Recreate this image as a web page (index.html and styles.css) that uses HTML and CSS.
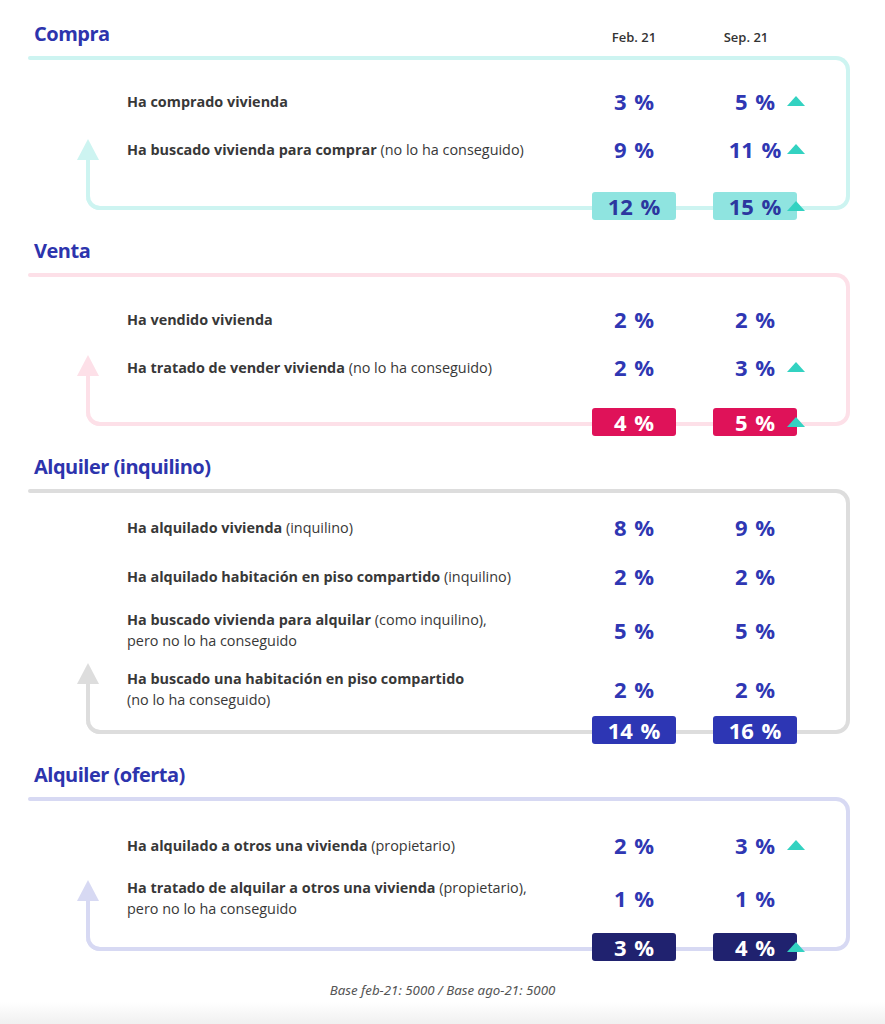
FILE: index.html
```html
<!DOCTYPE html>
<html lang="es">
<head>
<meta charset="utf-8">
<title>Compra, venta y alquiler</title>
<link rel="stylesheet" href="styles.css">
</head>
<body>
<main class="page">
  <section class="block compra">
    <div class="head">
      <h2 class="title">Compra</h2>
      <span class="col-h">Feb. 21</span>
      <span class="col-h col-h2">Sep. 21</span>
    </div>
    <div class="frame">
      <span class="arrow"></span>
      <div class="row"><p class="label"><b>Ha comprado vivienda</b></p><span class="val">3 %</span><span class="val up">5 %</span></div>
      <div class="row"><p class="label"><b>Ha buscado vivienda para comprar</b> (no lo ha conseguido)</p><span class="val">9 %</span><span class="val up">11 %</span></div>
      <div class="row totals"><span></span><span class="badge">12 %</span><span class="badge up">15 %</span></div>
    </div>
  </section>

  <section class="block venta">
    <div class="head"><h2 class="title">Venta</h2></div>
    <div class="frame">
      <span class="arrow"></span>
      <div class="row"><p class="label"><b>Ha vendido vivienda</b></p><span class="val">2 %</span><span class="val">2 %</span></div>
      <div class="row"><p class="label"><b>Ha tratado de vender vivienda</b> (no lo ha conseguido)</p><span class="val">2 %</span><span class="val up">3 %</span></div>
      <div class="row totals"><span></span><span class="badge">4 %</span><span class="badge up">5 %</span></div>
    </div>
  </section>

  <section class="block inquilino">
    <div class="head"><h2 class="title">Alquiler (inquilino)</h2></div>
    <div class="frame">
      <span class="arrow"></span>
      <div class="row"><p class="label"><b>Ha alquilado vivienda</b> (inquilino)</p><span class="val">8 %</span><span class="val">9 %</span></div>
      <div class="row"><p class="label"><b>Ha alquilado habitación en piso compartido</b> (inquilino)</p><span class="val">2 %</span><span class="val">2 %</span></div>
      <div class="row two"><p class="label"><b>Ha buscado vivienda para alquilar</b> (como inquilino),<br>pero no lo ha conseguido</p><span class="val">5 %</span><span class="val">5 %</span></div>
      <div class="row two"><p class="label"><b>Ha buscado una habitación en piso compartido</b><br>(no lo ha conseguido)</p><span class="val">2 %</span><span class="val">2 %</span></div>
      <div class="row totals"><span></span><span class="badge">14 %</span><span class="badge">16 %</span></div>
    </div>
  </section>

  <section class="block oferta">
    <div class="head"><h2 class="title">Alquiler (oferta)</h2></div>
    <div class="frame">
      <span class="arrow"></span>
      <div class="row"><p class="label"><b>Ha alquilado a otros una vivienda</b> (propietario)</p><span class="val">2 %</span><span class="val up">3 %</span></div>
      <div class="row two"><p class="label"><b>Ha tratado de alquilar a otros una vivienda</b> (propietario),<br>pero no lo ha conseguido</p><span class="val">1 %</span><span class="val">1 %</span></div>
      <div class="row totals"><span></span><span class="badge">3 %</span><span class="badge up">4 %</span></div>
    </div>
  </section>

  <p class="base">Base feb-21: 5000 / Base ago-21: 5000</p>
  <div class="fade"></div>
</main>
</body>
</html>
```

FILE: styles.css
```css
html, body {
  margin: 0;
  padding: 0;
  background: #ffffff;
}

body {
  font-family: "Open Sans", "Noto Sans", sans-serif;
  color: #3b3b3b;
}

.page {
  width: 885px;
  padding-top: 22px;
}

.block {
  margin: 0 35px 0 28px;
  --gap: 14px;
  --two: 44px;
}

.block + .block {
  margin-top: 29px;
}

.compra {
  --line: #cdf4f1;
  --badge: #8fe4e0;
  --badge-text: #2c379f;
  --pt: 24px;
  --bt: 12px;
}

.venta {
  --line: #fde0e8;
  --badge: #df1259;
  --badge-text: #ffffff;
  --pt: 25px;
  --bt: 10px;
}

.inquilino {
  --line: #dddddd;
  --badge: #2d36b4;
  --badge-text: #ffffff;
  --pt: 17px;
  --gap: 15px;
  --bt: -10px;
}

.oferta {
  --line: #d7d9f3;
  --badge: #20226f;
  --badge-text: #ffffff;
  --pt: 27px;
  --bt: -1px;
}

.head {
  display: grid;
  grid-template-columns: 1fr 84px 84px;
  column-gap: 37px;
  align-items: center;
  padding: 0 53px 0 6px;
  height: 24px;
  margin-bottom: 10px;
}

.title {
  margin: 0;
  font-family: "Open Sans", "Noto Sans", sans-serif;
  font-weight: 700;
  font-size: 20px;
  line-height: 24px;
  color: #2d34ad;
  letter-spacing: -0.5px;
  white-space: nowrap;
}

.col-h {
  font-size: 13px;
  font-weight: 600;
  color: #333333;
  text-align: center;
  padding-top: 6px;
}

.col-h2 {
  padding-right: 18px;
}

.frame {
  position: relative;
  margin-left: 58px;
  border: 4px solid var(--line);
  border-left: 0;
  border-radius: 0 14px 14px 14px;
  padding: var(--pt) 49px 0 41px;
  display: flex;
  flex-direction: column;
  gap: var(--gap);
}

.frame::before {
  content: "";
  position: absolute;
  left: -58px;
  top: -4px;
  width: 60px;
  height: 4px;
  border-radius: 2px 0 0 2px;
  background: var(--line);
}

.arrow {
  position: absolute;
  left: 0;
  bottom: -4px;
  width: 20px;
  height: 50px;
  box-sizing: border-box;
  border-left: 4px solid var(--line);
  border-bottom: 4px solid var(--line);
  border-bottom-left-radius: 14px;
}

.arrow::before {
  content: "";
  position: absolute;
  left: -13px;
  top: -21px;
  border-left: 11px solid transparent;
  border-right: 11px solid transparent;
  border-bottom: 21px solid var(--line);
}

.row {
  display: grid;
  grid-template-columns: 1fr 84px 84px;
  column-gap: 37px;
  align-items: center;
  min-height: 34px;
}

.row.two {
  min-height: var(--two);
}

.label {
  margin: 0;
  font-size: 14.4px;
  line-height: 21px;
  font-weight: 400;
  color: #383838;
}

.label b {
  font-weight: 700;
}

.val {
  position: relative;
  text-align: center;
  font-size: 22px;
  line-height: 24px;
  font-weight: 700;
  color: #2f37b3;
  word-spacing: 2px;
}

.up::after {
  content: "";
  position: absolute;
  left: 74px;
  top: 50%;
  margin-top: -5px;
  border-left: 9px solid transparent;
  border-right: 9px solid transparent;
  border-bottom: 10px solid #33d2c1;
}

.totals {
  min-height: 28px;
  margin-top: var(--bt);
  margin-bottom: -14px;
}

.badge {
  position: relative;
  height: 28px;
  line-height: 28px;
  border-radius: 3px;
  background: var(--badge);
  color: var(--badge-text);
  font-size: 22px;
  font-weight: 700;
  text-align: center;
  word-spacing: 2px;
}

.base {
  margin: 31px 0 0;
  text-align: center;
  font-family: "Noto Sans", sans-serif;
  font-style: italic;
  font-size: 13.3px;
  line-height: 16px;
  color: #555555;
}

.fade {
  height: 30px;
  margin-top: 4px;
  background: linear-gradient(#ffffff, #ebebeb);
}
```
